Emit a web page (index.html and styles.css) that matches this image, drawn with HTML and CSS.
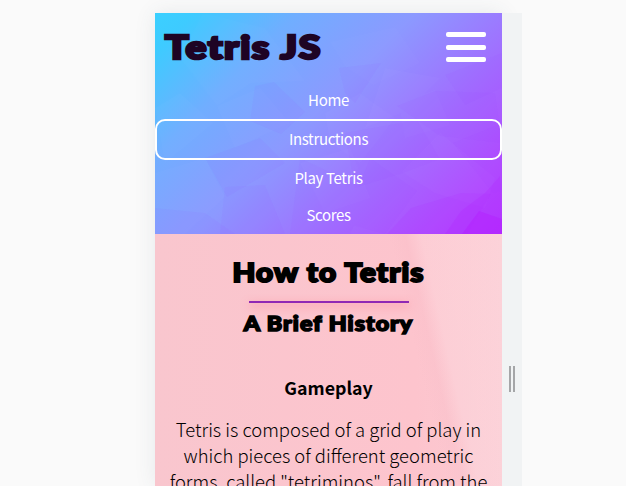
FILE: index.html
```html
<!DOCTYPE html>
<html lang="en">
<head>
<meta charset="utf-8">
<title>Tetris JS</title>
<link rel="stylesheet" href="styles.css">
</head>
<body>
<div class="stage">
  <div class="phone">
    <header class="header">
      <svg class="facets" viewBox="0 0 347 221" preserveAspectRatio="none" aria-hidden="true">
        <g fill="#fff">
          <path opacity=".015" d="M48 0 110 15 150 68 96 70 62 93 25 45zM175 29 240 14 265 50 218 72 190 53z"/>
          <path opacity=".02" d="M0 95 25 80 58 110 10 150zM62 93 105 75 135 110 80 135zM170 100 205 80 240 105 205 150 175 130z"/>
          <path opacity=".02" d="M230 55 285 65 253 97 210 115zM244 90 280 77 295 112 250 125zM0 160 50 145 70 184 30 221 0 221z"/>
          <path opacity=".02" d="M145 150 195 135 215 185 170 200zM247 159 285 120 340 165 330 195 280 180z"/>
        </g>
        <g fill="#9a40ff">
          <path opacity=".05" d="M100 73 119 69 150 99 126 121 95 108zM184 55 226 50 200 90 190 80zM290 62 347 40 347 75 310 92zM70 174 110 172 130 221 65 221z"/>
          <path opacity=".05" d="M242 93 280 78 340 80 347 130 285 123zM50 145 105 125 130 150 72 184zM190 120 262 107 285 146 248 160 200 175z"/>
          <path opacity=".05" d="M145 145 215 178 195 221 135 221zM298 130 338 180 347 178 347 110zM215 145 262 178 230 221 190 210zM0 195 50 200 80 221 0 221z"/>
        </g>
        <g fill="#b41cff">
          <path opacity=".1" d="M256 195 306 180 336 181 312 221 232 221z"/>
          <path opacity=".2" d="M306 198 330 180 345 163 347 221 290 221z"/>
          <path opacity=".4" d="M324 198 347 206 347 221 307 221z"/>
        </g>
      </svg>
      <div class="topbar">
        <h1 class="brand">Tetris JS</h1>
        <button class="burger" aria-label="Menu"><span></span><span></span><span></span></button>
      </div>
      <nav class="nav">
        <a class="link">Home</a>
        <a class="link active">Instructions</a>
        <a class="link">Play Tetris</a>
        <a class="link">Scores</a>
      </nav>
    </header>
    <main class="content">
      <h2 class="title">How to Tetris</h2>
      <div class="rule"></div>
      <h3 class="subtitle">A Brief History</h3>
      <h4 class="section">Gameplay</h4>
      <p class="copy">Tetris is composed of a grid of play in<br>which pieces of different geometric<br>forms, called "tetriminos", fall from the</p>
    </main>
  </div>
  <div class="resizer"><span></span><span></span></div>
</div>
</body>
</html>
```
FILE: styles.css
```css
* { box-sizing: border-box; margin: 0; }
body {
  height: 486px;
  overflow: hidden;
  background: #fafafa;
  font-family: "Noto Sans CJK SC", "Noto Sans", sans-serif;
}
.stage { display: flex; height: 486px; padding: 13px 0 0 155px; overflow: hidden; }
.phone {
  width: 347px;
  height: 473px;
  box-shadow: 0 0 20px rgba(60, 80, 100, .1);
}
.header {
  position: relative;
  height: 221px;
  background: linear-gradient(135deg, #3bd0ff 0%, #3ecbff 7%, #70aeff 25%, #8c99ff 46%, #a070ff 67%, #b04cff 87%, #b438ff 100%);
}
.facets { position: absolute; inset: 0; width: 100%; height: 100%; }
.topbar {
  position: relative;
  display: flex;
  justify-content: space-between;
  height: 69px;
  padding: 0 16px 0 10px;
}
.brand, .title, .subtitle {
  font-family: Lato, sans-serif;
  font-weight: 900;
  white-space: nowrap;
  paint-order: stroke fill;
}
.brand {
  color: #1e0424;
  font-size: 33px;
  line-height: 66px;
  letter-spacing: 1.2px;
  -webkit-text-stroke: 2.6px #1e0424;
  transform: scaleX(1.19);
  transform-origin: left center;
}
.burger {
  display: flex;
  flex-direction: column;
  justify-content: space-between;
  width: 40px;
  height: 30px;
  margin-top: 19px;
  padding: 0;
  border: 0;
  background: none;
}
.burger span { width: 40px; height: 5px; border-radius: 2px; background: #fff; }
.nav { position: relative; display: flex; flex-direction: column; }
.link {
  height: 37px;
  color: #fff;
  font-size: 15px;
  line-height: 36px;
  letter-spacing: -.35px;
  text-align: center;
}
.active { height: 41px; border: 2px solid #fff; border-radius: 10px; }
.content {
  height: 252px;
  padding-top: 18px;
  overflow: hidden;
  text-align: center;
  color: #000;
  background:
    linear-gradient(77deg, transparent 72%, rgba(240, 175, 190, .1) 76%, rgba(255, 255, 255, .15) 80%, rgba(255, 235, 238, .24) 100%),
    linear-gradient(90deg, #f9c6ce, #fdc4cd 75%, #fbcad2);
}
.title {
  font-size: 26px;
  line-height: 41px;
  margin-bottom: 8px;
  letter-spacing: 1px;
  -webkit-text-stroke: 2px #000;
  transform: scaleX(1.14);
}
.rule {
  width: 160px;
  height: 2px;
  margin: 0 auto;
  background: #9028b4;
  box-shadow: 0 3px 8px rgba(255, 70, 95, .55);
}
.subtitle {
  margin-top: 7px;
  font-size: 20px;
  line-height: 27px;
  letter-spacing: .9px;
  -webkit-text-stroke: 1.6px #000;
  transform: scaleX(1.16);
}
.section { margin-top: 35px; font-size: 17.8px; line-height: 30px; font-weight: 700; }
.copy { margin-top: 14px; font-size: 18.45px; line-height: 26px; font-weight: 300; white-space: nowrap; }
.resizer {
  display: flex;
  align-items: flex-start;
  justify-content: center;
  flex: none;
  gap: 2px;
  width: 20px;
  height: 473px;
  padding-top: 353px;
  background: #f1f3f4;
}
.resizer span { width: 2px; height: 26px; background: #a5a6a8; }
```
